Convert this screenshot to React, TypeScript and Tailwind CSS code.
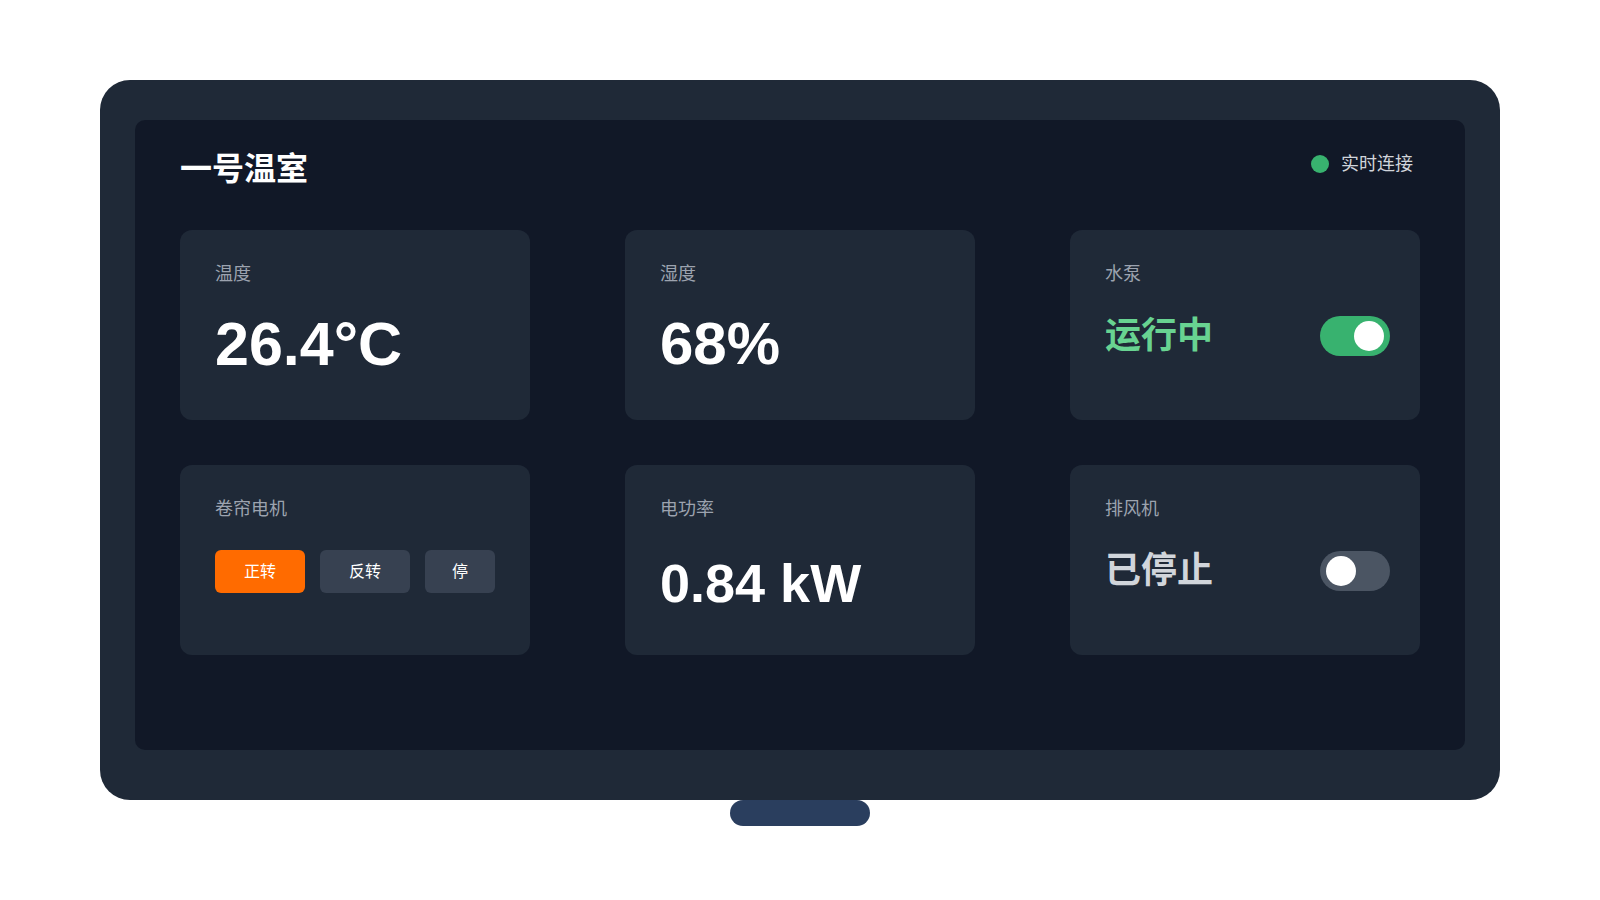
import React, { useState } from 'react';

const font = { fontFamily: '"Liberation Sans", "Noto Sans CJK SC", sans-serif' };

function Toggle({ on, onChange }: { on: boolean; onChange: () => void }) {
  return (
    <button
      onClick={onChange}
      className={`flex items-center w-[70px] h-[40px] rounded-full px-[6px] transition-colors ${
        on ? 'bg-[#38b26f] justify-end' : 'bg-[#4b5563] justify-start'
      }`}
    >
      <span className="block w-[30px] h-[30px] rounded-full bg-white" />
    </button>
  );
}

function Card({ label, children }: { label: string; children: React.ReactNode }) {
  return (
    <div className="h-[190px] rounded-xl bg-[#1f2937] pt-[30px] pl-[35px] pr-[30px]">
      <p className="text-lg leading-[28px] text-[#9ca3af]">{label}</p>
      {children}
    </div>
  );
}

export default function App() {
  const [pump, setPump] = useState(true);
  const [fan, setFan] = useState(false);
  const [motor, setMotor] = useState<'fwd' | 'rev' | 'stop'>('fwd');

  const motorButtons: { key: 'fwd' | 'rev' | 'stop'; label: string; width: string }[] = [
    { key: 'fwd', label: '正转', width: 'w-[90px]' },
    { key: 'rev', label: '反转', width: 'w-[90px]' },
    { key: 'stop', label: '停', width: 'w-[70px]' },
  ];

  return (
    <div className="min-h-screen bg-white flex flex-col items-center pt-[80px]" style={font}>
      <div className="w-[1400px] h-[720px] rounded-[30px] bg-[#1f2937] pt-10 px-[35px] pb-[50px]">
        <div className="h-full rounded-[10px] bg-[#111827] px-[45px] pt-[29px]">
          <div className="flex justify-between items-start mb-[41px] pr-[7px]">
            <h1 className="text-[32px] leading-[40px] font-bold text-white">一号温室</h1>
            <div className="flex items-center gap-3 h-[28px] mt-[1px]">
              <span className="w-[18px] h-[18px] rounded-full bg-[#38b26f]" />
              <span className="text-lg text-[#d1d5db]">实时连接</span>
            </div>
          </div>

          <div className="grid grid-cols-3 gap-x-[95px] gap-y-[45px]">
            <Card label="温度">
              <p className="mt-[26px] text-[61px] leading-none font-bold text-white">26.4°C</p>
            </Card>
            <Card label="湿度">
              <p className="mt-[26px] text-[60px] leading-none font-bold text-white">68%</p>
            </Card>
            <Card label="水泵">
              <div className="mt-[28px] flex items-center justify-between h-[40px]">
                <span className={`text-[36px] leading-[40px] font-bold ${pump ? 'text-[#68d391]' : 'text-[#d1d5db]'}`}>
                  {pump ? '运行中' : '已停止'}
                </span>
                <Toggle on={pump} onChange={() => setPump(!pump)} />
              </div>
            </Card>

            <Card label="卷帘电机">
              <div className="mt-[27px] flex gap-[15px]">
                {motorButtons.map((b) => (
                  <button
                    key={b.key}
                    onClick={() => setMotor(b.key)}
                    className={`${b.width} h-[43px] rounded-md text-base text-white ${
                      motor === b.key ? 'bg-[#ff6b00]' : 'bg-[#374151]'
                    }`}
                  >
                    {b.label}
                  </button>
                ))}
              </div>
            </Card>
            <Card label="电功率">
              <p className="mt-[33px] text-[54px] leading-none font-bold text-white">0.84 kW</p>
            </Card>
            <Card label="排风机">
              <div className="mt-[28px] flex items-center justify-between h-[40px]">
                <span className={`text-[36px] leading-[40px] font-bold ${fan ? 'text-[#68d391]' : 'text-[#d1d5db]'}`}>
                  {fan ? '运行中' : '已停止'}
                </span>
                <Toggle on={fan} onChange={() => setFan(!fan)} />
              </div>
            </Card>
          </div>
        </div>
      </div>
      <div className="w-[140px] h-[26px] rounded-full bg-[#2a3e5e]" />
    </div>
  );
}
